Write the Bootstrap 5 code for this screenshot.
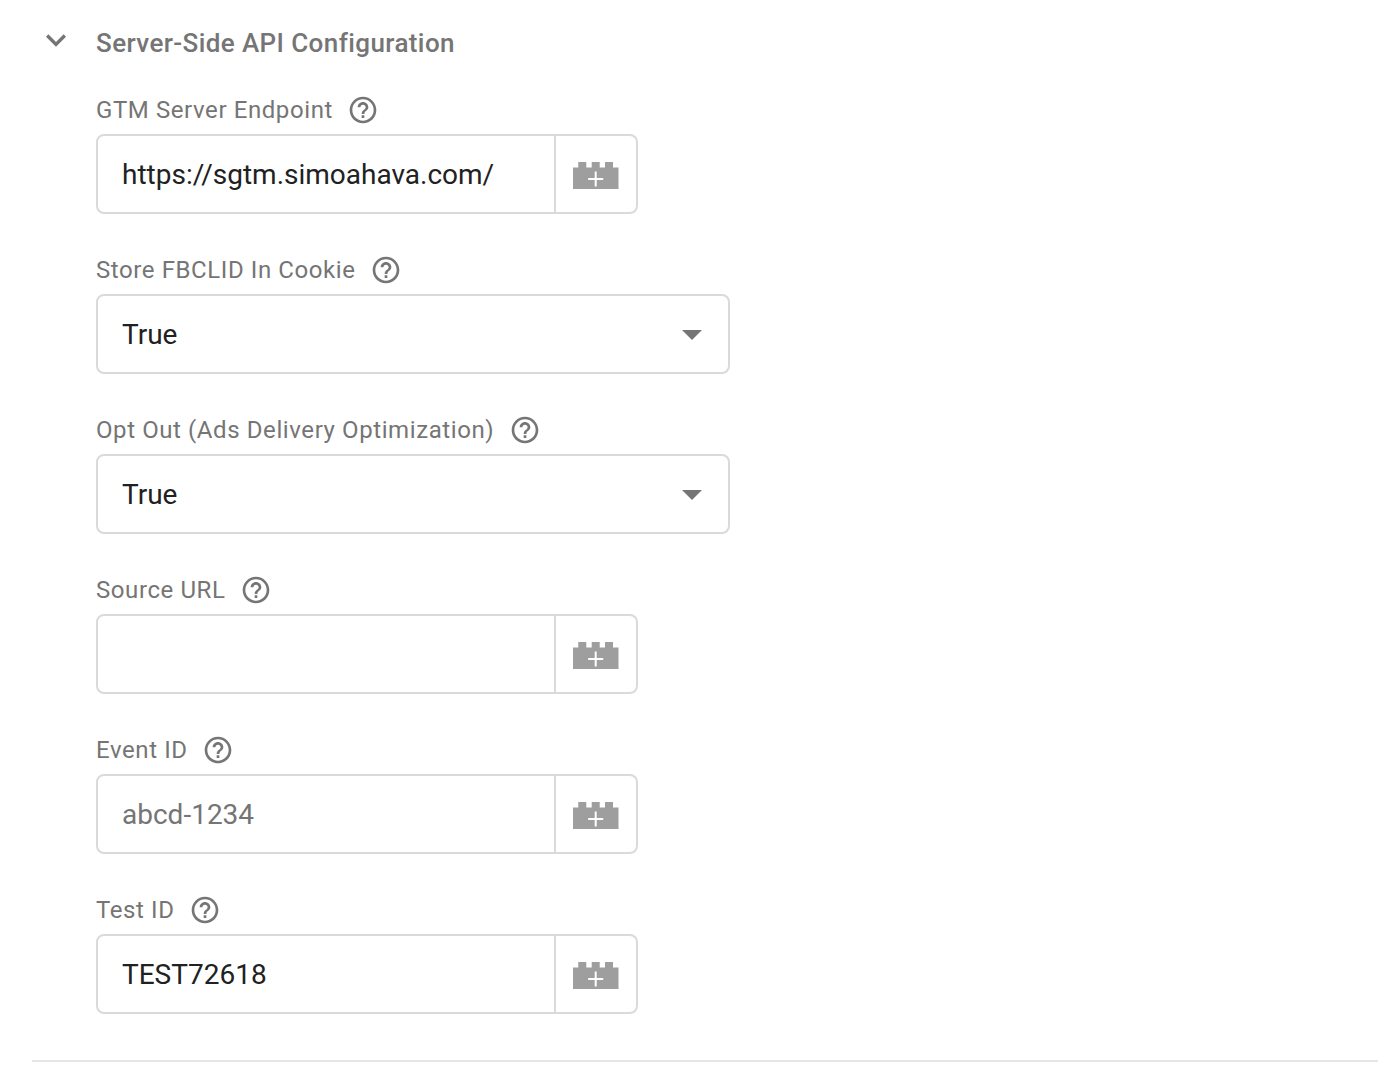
<!DOCTYPE html>
<html lang="en">
<head>
<meta charset="utf-8">
<meta name="viewport" content="width=device-width, initial-scale=1">
<title>Server-Side API Configuration</title>
<link href="https://cdn.jsdelivr.net/npm/bootstrap@5.3.0/dist/css/bootstrap.min.css" rel="stylesheet">
<style>
  body { font-family: Roboto, "Liberation Sans", sans-serif; color: #212121; background: #fff; }
  .config-section { margin-left: 32px; height: 1062px; padding: 20px 0 0 4px; border-bottom: 2px solid #e6e6e6; }
  .config-toggle { width: 40px; height: 40px; color: #757575; }
  .config-body { margin-left: 20px; }
  .config-title { font-size: 26px; font-weight: 500; line-height: 32px; letter-spacing: .4px; color: #757575; margin: 7px 0 35px; }
  .field { height: 160px; }
  .field-label { height: 32px; margin-bottom: 8px; gap: 14.300px; font-size: 24px; line-height: 32px; letter-spacing: .590px; color: #757575; }
  .field .form-control, .field .form-select, .variable-btn { height: 80px; border: 2px solid #dadada; border-radius: 8px; box-shadow: none; }
  .field .form-control, .field .form-select { font-size: 28px; line-height: 40px; padding: 18px 24px; color: #212121; }
  .field .form-control::placeholder { color: #757575; opacity: 1; }
  .field .input-group { width: 542px; }
  .field .form-select { width: 634px; padding: 19px 24px 17px; background-size: 20px 10px; background-position: right 26px top 34px;
    background-image: url("data:image/svg+xml,%3csvg xmlns='http://www.w3.org/2000/svg' viewBox='0 0 20 10'%3e%3cpath fill='%23757575' d='M0 0h20L10 10z'/%3e%3c/svg%3e"); }
  .field .input-group > .variable-btn.btn:not(:first-child) { width: 84px; margin-left: -2px !important; color: #9e9e9e; }
  .variable-btn svg { margin-top: 3px; }
</style>
</head>
<body>
<svg class="d-none" xmlns="http://www.w3.org/2000/svg">
  <symbol id="help" viewBox="0 0 24 24"><path fill="currentColor" d="M11 18h2v-2h-2v2zm1-16C6.480 2 2 6.480 2 12s4.480 10 10 10 10-4.480 10-10S17.520 2 12 2zm0 18c-4.410 0-8-3.590-8-8s3.590-8 8-8 8 3.590 8 8-3.590 8-8 8zm0-14c-2.210 0-4 1.790-4 4h2c0-1.100.9-2 2-2s2 .9 2 2c0 2-3 1.750-3 5h2c0-2.250 3-2.500 3-5 0-2.210-1.790-4-4-4z"/></symbol>
  <symbol id="brick" viewBox="0 0 46 27"><path fill="currentColor" d="M0 5.500h5.300V0h8v5.500h5.400V0h8v5.500H32V0h8v5.500h5.500V27H0z"/><path stroke="#fff" stroke-width="2" d="M22.700 9.500v15M15.200 17h15"/></symbol>
</svg>
<main class="config-section d-flex align-items-start">
  <button type="button" class="btn border-0 p-0 d-flex config-toggle" aria-label="Collapse">
    <svg width="40" height="40" viewBox="0 0 24 24"><path fill="currentColor" d="M16.590 8.590 12 13.170 7.410 8.590 6 10l6 6 6-6z"/></svg>
  </button>
  <form class="config-body">
    <h1 class="config-title">Server-Side API Configuration</h1>
    <div class="field">
      <label class="field-label d-flex align-items-center" for="endpoint">GTM Server Endpoint <svg width="32" height="32"><use href="#help"/></svg></label>
      <div class="input-group">
        <input class="form-control" id="endpoint" type="text" value="https://sgtm.simoahava.com/">
        <button class="btn variable-btn p-0 d-flex align-items-center justify-content-center" type="button" aria-label="Insert variable"><svg width="46" height="27"><use href="#brick"/></svg></button>
      </div>
    </div>
    <div class="field">
      <label class="field-label d-flex align-items-center" for="fbclid">Store FBCLID In Cookie <svg width="32" height="32"><use href="#help"/></svg></label>
      <select class="form-select" id="fbclid"><option>True</option></select>
    </div>
    <div class="field">
      <label class="field-label d-flex align-items-center" for="optout">Opt Out (Ads Delivery Optimization) <svg width="32" height="32"><use href="#help"/></svg></label>
      <select class="form-select" id="optout"><option>True</option></select>
    </div>
    <div class="field">
      <label class="field-label d-flex align-items-center" for="source">Source URL <svg width="32" height="32"><use href="#help"/></svg></label>
      <div class="input-group">
        <input class="form-control" id="source" type="text">
        <button class="btn variable-btn p-0 d-flex align-items-center justify-content-center" type="button" aria-label="Insert variable"><svg width="46" height="27"><use href="#brick"/></svg></button>
      </div>
    </div>
    <div class="field">
      <label class="field-label d-flex align-items-center" for="event">Event ID <svg width="32" height="32"><use href="#help"/></svg></label>
      <div class="input-group">
        <input class="form-control" id="event" type="text" placeholder="abcd-1234">
        <button class="btn variable-btn p-0 d-flex align-items-center justify-content-center" type="button" aria-label="Insert variable"><svg width="46" height="27"><use href="#brick"/></svg></button>
      </div>
    </div>
    <div class="field">
      <label class="field-label d-flex align-items-center" for="test">Test ID <svg width="32" height="32"><use href="#help"/></svg></label>
      <div class="input-group">
        <input class="form-control" id="test" type="text" value="TEST72618">
        <button class="btn variable-btn p-0 d-flex align-items-center justify-content-center" type="button" aria-label="Insert variable"><svg width="46" height="27"><use href="#brick"/></svg></button>
      </div>
    </div>
  </form>
</main>
<script src="https://cdn.jsdelivr.net/npm/bootstrap@5.3.0/dist/js/bootstrap.bundle.min.js"></script>
</body>
</html>
